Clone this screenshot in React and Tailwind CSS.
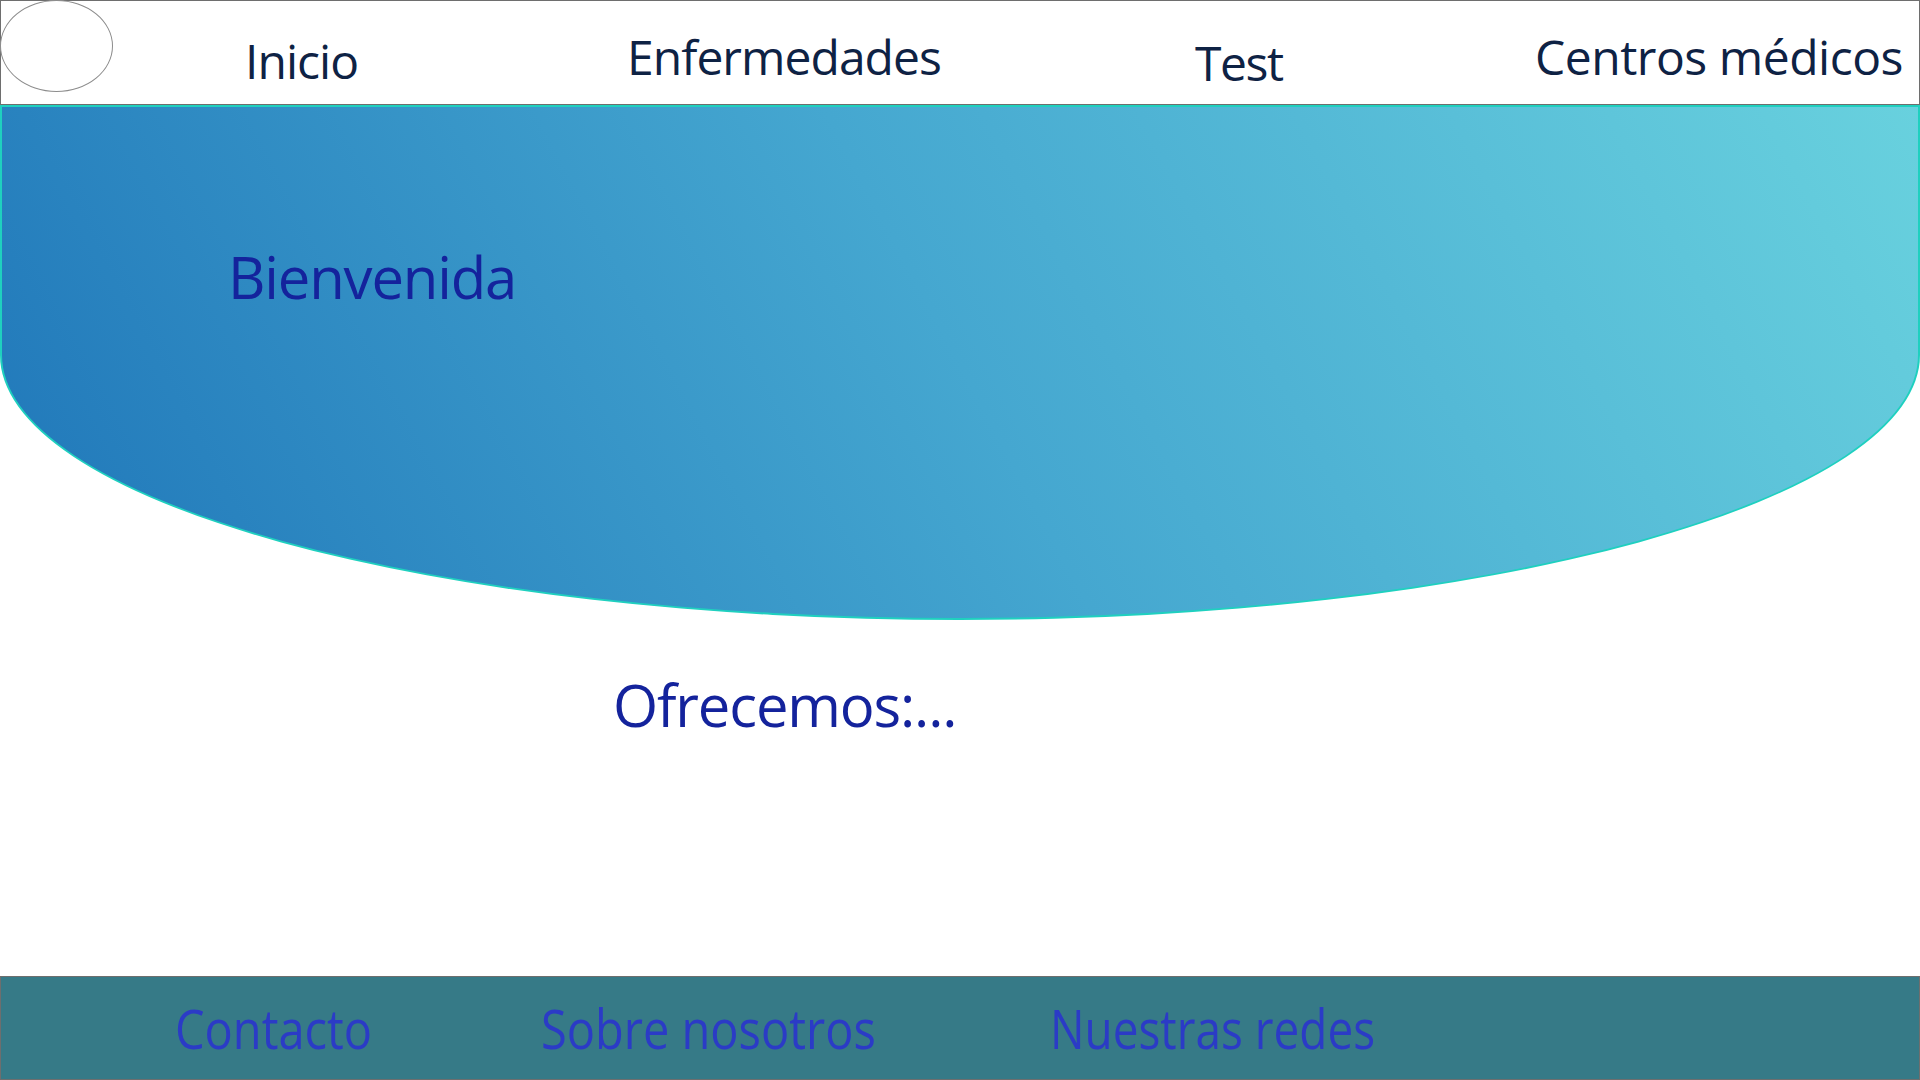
export default function App() {
  const font = { fontFamily: '"Open Sans", "Noto Sans", sans-serif' };

  return (
    <div className="w-[1920px] h-[1080px] flex flex-col bg-white overflow-hidden" style={font}>
      {/* header */}
      <header className="h-[105px] shrink-0 flex items-start border border-[#6e6e6e] text-[#0e2244] text-[48px] leading-none tracking-[-0.02em]">
        <div className="w-[113px] h-[92px] -ml-px -mt-px rounded-[50%] border border-[#8c8c8c] bg-white shrink-0" />
        <div className="w-[382px] ml-[132px] mt-[36px]">Inicio</div>
        <div className="w-[568px] mt-[32px]">Enfermedades</div>
        <div className="w-[340px] mt-[38px] tracking-[-0.03em]">Test</div>
        <div className="mt-[32px] whitespace-nowrap tracking-[-0.01em]">Centros médicos</div>
      </header>

      {/* hero */}
      <section className="h-[515px] shrink-0 border-2 border-[#1fd0bf] rounded-b-[960px_265px] bg-linear-[62deg] from-[#1f76b9] via-[#45a7d0] to-[#68d1de]">
        <h1 className="pl-[226px] pt-[141px] text-[58px] leading-none tracking-[-0.02em] text-[#14239c] font-normal">
          Bienvenida
        </h1>
      </section>

      {/* body */}
      <main className="flex-1">
        <p className="pl-[613px] pt-[56px] text-[58px] leading-none tracking-[-0.02em] text-[#14239c]">
          Ofrecemos:...
        </p>
      </main>

      {/* footer */}
      <footer className="h-[104px] shrink-0 flex items-start border border-[#6e6e6e] bg-[#367a87] pl-[174px] text-[54px] leading-none text-[#2b3bc6]">
        <div className="w-[366px] mt-[24px]">
          <span className="inline-block origin-left scale-x-[0.87] whitespace-nowrap">Contacto</span>
        </div>
        <div className="w-[509px] mt-[24px]">
          <span className="inline-block origin-left scale-x-[0.87] whitespace-nowrap">Sobre nosotros</span>
        </div>
        <div className="mt-[24px]">
          <span className="inline-block origin-left scale-x-[0.85] whitespace-nowrap">Nuestras redes</span>
        </div>
      </footer>
    </div>
  );
}
